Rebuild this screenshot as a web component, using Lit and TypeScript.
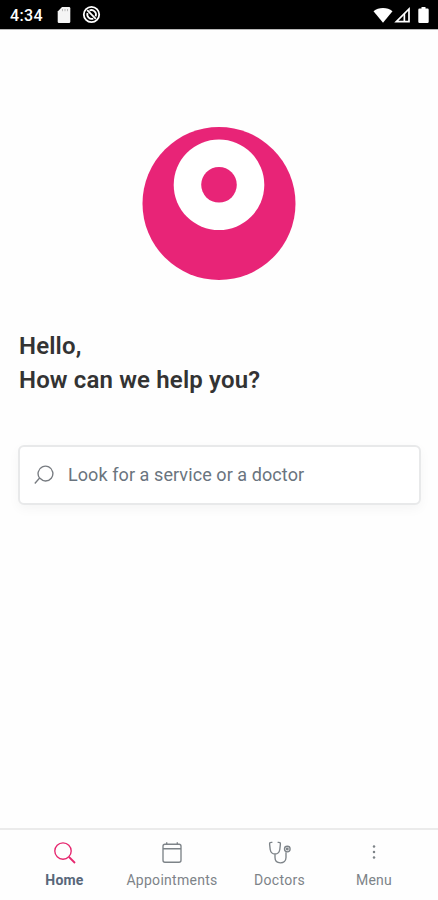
import { LitElement, html, css, svg } from "lit";
import { customElement, property } from "lit/decorators.js";
import { classMap } from "lit/directives/class-map.js";

type IconName = "home" | "calendar" | "stethoscope" | "dots";

const icons: Record<IconName, unknown> = {
  home: svg`<circle cx="10" cy="10" r="8.2"/><path d="M16 16l6 6" stroke-width="1.8"/>`,
  calendar: svg`<rect x="3" y="3.2" width="18" height="18" rx="2"/><path d="M3 7.7h18M6.7 1.2v2M17.3 1.2v2"/>`,
  stethoscope: svg`<path d="M4.4 1.3H3.300C2 1.300 1.500 2 1.600 3.200L2.200 8.500C2.700 11.400 4.500 13 7 13s4.300-1.600 4.800-4.500l.6-5.300c.1-1.200-.4-1.900-1.700-1.900H9.600M7 13v3.600c0 3.200 2.200 5.200 5.400 5.200s5.600-2 5.600-5.200v-5.400"/><circle cx="19.300" cy="8" r="2.800"/><circle cx="19.300" cy="8" r=".8"/>`,
  dots: svg`<g fill="currentColor" stroke="none"><circle cx="12" cy="5.500" r="1.250"/><circle cx="12" cy="11" r="1.250"/><circle cx="12" cy="16.500" r="1.250"/></g>`,
};

@customElement("status-bar")
class StatusBar extends LitElement {
  static styles = css`
    :host {
      display: flex;
      align-items: center;
      height: 29px;
      background: #000;
      color: #fff;
      border-bottom: 1px solid #b9b9b9;
      flex: none;
      box-sizing: content-box;
    }
    .time {
      width: 48px;
      padding: 2px 0 0 10px;
      box-sizing: border-box;
      font: 500 16px/29px Roboto, sans-serif;
      letter-spacing: 0.35px;
    }
    svg { display: block; flex: none; }
    .card { margin-left: 9px; }
    .sync { margin-left: 11px; }
    .wifi { margin-left: auto; }
    .signal { margin-left: 1px; }
    .battery { margin: 0 9px 0 8px; }
  `;
  render() {
    return html`
      <span class="time">4:34</span>
      <svg class="card" width="14" height="18" viewBox="0 0 14 18"><path fill="#f4f4f4" d="M5 1h7q1.300 0 1.300 1.300v13.400q0 1.300-1.300 1.300H2Q.7 17 .7 15.700V5.500z"/><path stroke="#aaa" stroke-width=".8" d="M5.500 3v2.200M8 3v2.200M10.500 3v2.200"/></svg>
      <svg class="sync" width="19" height="19" viewBox="0 0 19 19" fill="none" stroke="#fff"><circle cx="9.500" cy="9.500" r="7.700" stroke-width="1.800"/><path stroke-width="1.800" d="M5.200 5.200l8.600 8.600M7.500 5.500a4.500 4.500 0 0 1 6.100 5.800M5.500 8a4.500 4.500 0 0 0 5.800 5.600"/></svg>
      <svg class="wifi" width="20" height="18" viewBox="0 0 20 18"><path fill="#fff" d="M.5 5.200Q4.500 2 10 2t9.500 3.200L10 16.700z"/></svg>
      <svg class="signal" width="16" height="18" viewBox="0 0 16 18"><path fill="none" stroke="#fff" stroke-width="1.700" d="M15 3v12.700H2.300z"/><path fill="#fff" d="M9.500 8l1.700-1.300v9H9.500z"/></svg>
      <svg class="battery" width="11" height="18" viewBox="0 0 11 18"><path fill="#fff" d="M3.500 1h4v1.600h2q1.200 0 1.200 1.200v12q0 1.200-1.200 1.200h-8Q.3 17 .3 15.800v-12q0-1.200 1.200-1.200h2z"/></svg>
    `;
  }
}

@customElement("nav-item")
class NavItem extends LitElement {
  @property() icon: IconName = "home";
  @property() label = "";
  @property({ type: Boolean }) active = false;

  static styles = css`
    :host { display: block; }
    .item {
      display: flex;
      flex-direction: column;
      align-items: center;
      padding-top: 11px;
      color: #7d8388;
      font: 400 14px/18px Roboto, sans-serif;
      letter-spacing: 0.28px;
    }
    svg { width: 24px; height: 24px; fill: none; stroke: currentColor; stroke-width: 1.35; }
    .label { margin-top: 6px; white-space: nowrap; }
    .active { color: #58677a; font-weight: 700; letter-spacing: 0.2px; }
    .active svg { color: #e6276f; }
  `;
  render() {
    return html`<div class=${classMap({ item: true, active: this.active })}>
      <svg viewBox="0 0 24 24">${icons[this.icon]}</svg>
      <span class="label">${this.label}</span>
    </div>`;
  }
}

@customElement("app-root")
class AppRoot extends LitElement {
  static styles = css`
    :host {
      display: flex;
      flex-direction: column;
      height: 900px;
      background: #fefefe;
      font-family: Roboto, sans-serif;
      overflow: hidden;
    }
    main {
      flex: 1;
      display: flex;
      flex-direction: column;
      padding: 96px 17.5px 0 18px;
    }
    .logo { display: block; width: 154px; height: 154px; align-self: center; }
    h1 {
      margin: 49px 0 0 1px;
      font-size: 24px;
      line-height: 34px;
      font-weight: 600;
      color: #333;
      letter-spacing: 0.15px;
    }
    .search {
      display: flex;
      align-items: center;
      box-sizing: border-box;
      height: 60px;
      margin-top: 48px;
      padding-left: 14px;
      border: 2px solid #e8e9ea;
      border-radius: 6px;
      background: #fff;
      box-shadow: 0 4px 12px rgba(0, 0, 0, 0.04);
      color: #6a747e;
      font-size: 18px;
      letter-spacing: 0.08px;
    }
    .search span { padding-bottom: 1px; }
    .search svg { width: 20px; height: 20px; margin-right: 14px; fill: none; stroke: #777b80; stroke-width: 1.35; }
    nav {
      display: grid;
      grid-template-columns: 107px 108px 107px 82px;
      box-sizing: border-box;
      height: 72px;
      padding-left: 11px;
      background: #fefefe;
      border-top: 2px solid #ebebeb;
    }
  `;
  render() {
    return html`
      <status-bar></status-bar>
      <main>
        <svg class="logo" viewBox="0 0 154 154">
          <circle cx="77" cy="77.500" r="76.500" fill="#e82477"/>
          <circle cx="77" cy="58.800" r="45.300" fill="#fff"/>
          <circle cx="77" cy="58.800" r="17.800" fill="#e82477"/>
        </svg>
        <h1>Hello,<br />How can we help you?</h1>
        <div class="search">
          <svg viewBox="0 0 20 20"><path d="M5.600 13.100A7.400 7.400 0 1 1 11.500 16Q8.500 16 5.600 13.100L.8 18.500"/></svg>
          <span>Look for a service or a doctor</span>
        </div>
      </main>
      <nav>
        <nav-item icon="home" label="Home" active></nav-item>
        <nav-item icon="calendar" label="Appointments"></nav-item>
        <nav-item icon="stethoscope" label="Doctors"></nav-item>
        <nav-item icon="dots" label="Menu"></nav-item>
      </nav>
    `;
  }
}
